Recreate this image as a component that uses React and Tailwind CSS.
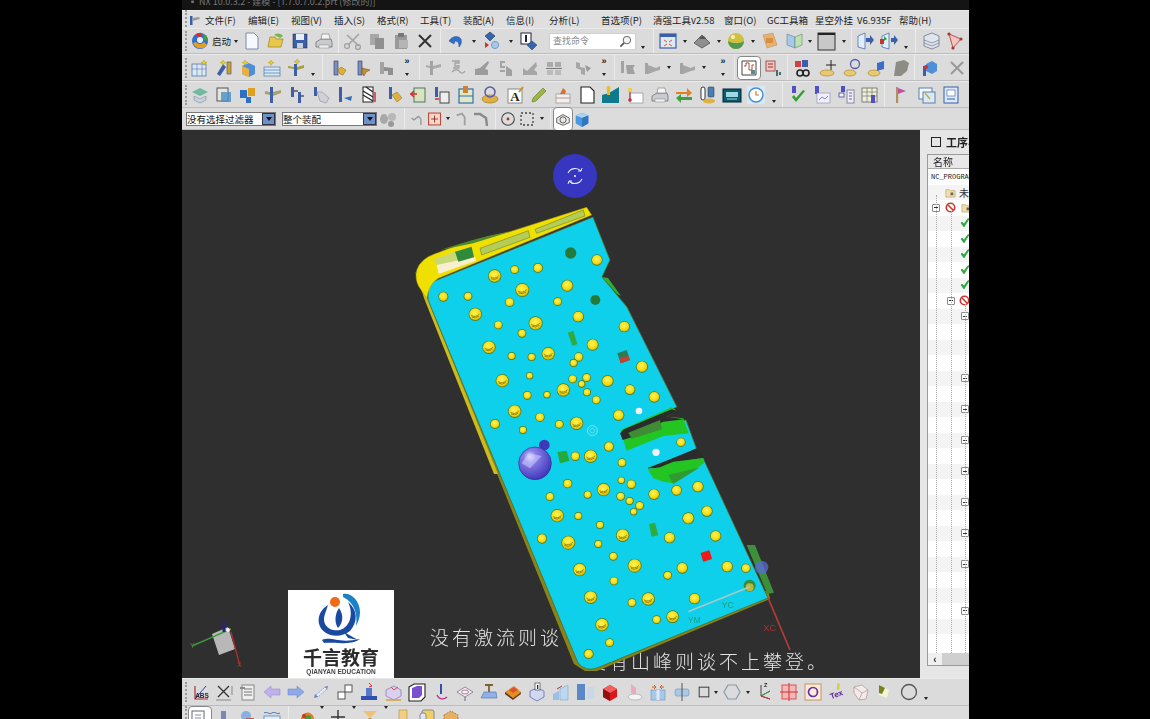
import React from "react";

const CJK = { fontFamily: '"Noto Sans CJK SC","Liberation Sans",sans-serif' };

const disabled = "#a3a3a3";
const Book = ({ f = "#7b8fc9" }) => <rect x="6" y="3" width="4" height="14" fill={f} stroke="#334" strokeWidth=".6" />;
const Spark = ({ x = 10, y = 4 }) => <path d={`M${x} ${y - 3}l1 2 2 .5-2 1-1 2-1-2-2-1 2-.5z`} fill="#e8d020" stroke="#8a7a10" strokeWidth=".3" />;

const icons = {
  logo: <><circle cx="10" cy="10" r="8" fill="#2f6fd0" /><path d="M3 12a8 8 0 0 0 14 2l-3-3a5 5 0 0 1-8 0z" fill="#e4a020" /><path d="M5 4a8 8 0 0 1 7-2l-2 5z" fill="#d03030" /><path d="M14 3a8 8 0 0 1 4 7l-5-1z" fill="#40a040" /><circle cx="10" cy="9" r="3" fill="#e8eef8" /></>,
  doc: <path d="M4 2h8l4 4v12H4z" fill="#f5f8fc" stroke="#7b8ea8" />,
  folder: <><path d="M2 16l2-10h5l1 2h7l-2 8z" fill="#e8c84a" stroke="#9a8420" strokeWidth=".7" /><path d="M8 4c3-2 6-2 9 1l-3 2z" fill="#7ab648" /></>,
  save: <><rect x="3" y="3" width="14" height="14" fill="#3a5ea8" stroke="#223" strokeWidth=".5" /><rect x="6" y="3" width="8" height="6" fill="#e8eef5" /><rect x="7" y="12" width="6" height="5" fill="#c8d0dc" /></>,
  print: <><path d="M2 11l5-3h10l1 3v5H2z" fill="#c8ccd0" stroke="#555" strokeWidth=".6" /><path d="M7 8l1-5h7l1 5z" fill="#f5f5f5" stroke="#777" strokeWidth=".6" /><rect x="5" y="14" width="10" height="3" fill="#eee" stroke="#777" strokeWidth=".4" /></>,
  cut: <><path d="M4 4l12 11M16 3L5 14" stroke={disabled} strokeWidth="1.6" /><circle cx="4" cy="15" r="2.4" fill="none" stroke={disabled} strokeWidth="1.4" /><circle cx="15" cy="16" r="2.4" fill="none" stroke={disabled} strokeWidth="1.4" /></>,
  copy: <><rect x="3" y="3" width="9" height="11" fill="#a8a8a8" /><rect x="8" y="7" width="9" height="11" fill="#8f8f8f" /></>,
  paste: <><rect x="4" y="4" width="12" height="14" fill="#999" /><rect x="7" y="2" width="6" height="4" fill="#777" /><rect x="8" y="9" width="9" height="8" fill="#b5b5b5" /></>,
  x: <path d="M4 4l12 12M16 4L4 16" stroke="#333" strokeWidth="2" />,
  xg: <path d="M4 4l12 12M16 4L4 16" stroke="#999" strokeWidth="2" />,
  undo: <path d="M4 10c3-5 9-6 12-2 1 3 0 6-2 8 0-4-1-6-4-6l-1 3z" fill="#2f6fc8" stroke="#1e4a90" strokeWidth=".5" />,
  diamond: <><path d="M8 1l5 4-5 5-5-5z" fill="#3465b0" stroke="#123" strokeWidth=".5" /><path d="M3 11l4 3-4 3z" fill="#d03020" /><circle cx="13" cy="14" r="3.6" fill="#a8c8e8" stroke="#6f9fd0" /></>,
  info: <><rect x="2" y="2" width="10" height="11" fill="#fff" stroke="#223" /><rect x="6" y="4" width="2" height="7" fill="#223" /><path d="M13 10l5 4-5 5-5-5z" fill="#3465b0" stroke="#123" strokeWidth=".4" /></>,
  fit: <><rect x="2" y="3" width="16" height="14" fill="#dfe8f5" stroke="#3a60a8" strokeWidth="1.2" /><rect x="2" y="3" width="16" height="3" fill="#3a60a8" /><path d="M6 9l3 2M14 9l-3 2M6 15l3-2M14 15l-3-2" stroke="#d06020" /></>,
  shade: <><path d="M2 12l8-8 8 8-8 5z" fill="#8f8f8f" stroke="#333" strokeWidth=".6" /><path d="M7 8c2-4 6-4 7 0z" fill="#555" /></>,
  sphere: <><circle cx="10" cy="10" r="8" fill="#d0c040" /><path d="M2 10a8 8 0 0 0 16 0c-4 3-11 3-16 0z" fill="#4f9a50" /><circle cx="7" cy="6" r="2" fill="#f5f0c0" /></>,
  layer: <><path d="M3 4l10-2 4 12-10 3z" fill="#e8b070" stroke="#b09060" strokeWidth=".5" /><rect x="6" y="7" width="7" height="5" fill="#d89040" /></>,
  book3: <><path d="M3 3l8 3v11l-8-3z" fill="#a8c8e8" stroke="#5a80a8" strokeWidth=".6" /><path d="M11 6l7-3v11l-7 3z" fill="#bfe0b0" stroke="#5a9060" strokeWidth=".6" /></>,
  square: <><rect x="2" y="2" width="17" height="17" fill="#c8c8c8" stroke="#333" /><rect x="2" y="2" width="17" height="2" fill="#222" /></>,
  doorb: <><path d="M3 5l7-3v16l-7-2z" fill="#e0eefc" stroke="#3a60a8" strokeWidth=".7" /><path d="M11 7h4V4l4 5-4 5v-3h-4z" fill="#3a60a8" /></>,
  doorg: <><path d="M3 5l7-3v16l-7-2z" fill="#e0eefc" stroke="#3a60a8" strokeWidth=".7" /><rect x="1" y="8" width="4" height="5" fill="#d03030" /><path d="M5 5l3 3-3 2z" fill="#30a040" /><path d="M12 7h3V4l4 5-4 5v-3h-3z" fill="#3a60a8" /></>,
  stack: <><path d="M3 5l8-3 7 3v10l-7 3-8-3z" fill="#dde5ee" stroke="#667" strokeWidth=".7" /><path d="M3 9l8 3 7-3M3 12l8 3 7-3" stroke="#667" strokeWidth=".6" fill="none" /></>,
  net: <><path d="M4 3l12 5-8 9z" fill="#f4c4c0" stroke="#b03030" strokeWidth=".8" /><circle cx="4" cy="3" r="1.6" fill="#b03030" /><circle cx="16" cy="8" r="1.6" fill="#b03030" /><circle cx="8" cy="17" r="1.6" fill="#b03030" /></>,
  t1: <><rect x="2" y="6" width="14" height="12" fill="#dce8f5" stroke="#5b78a8" strokeWidth=".8" /><path d="M2 11h14M7 6v12M12 6v12" stroke="#5b78a8" strokeWidth=".6" /><Spark x={14} y={5} /></>,
  t2: <><path d="M3 16L9 6l3 3-6 9z" fill="#3d5fa8" /><rect x="13" y="4" width="4" height="12" fill="#c8a040" stroke="#333" strokeWidth=".5" /><Spark x={9} y={5} /></>,
  t3: <><path d="M4 8l7-3 6 3v8l-6 3-7-3z" fill="#4f8fd8" /><path d="M4 8l7 3v8l-7-3z" fill="#e8b040" /><Spark x={7} y={5} /></>,
  t4: <><rect x="2" y="9" width="16" height="9" fill="#d8e8f5" stroke="#4a7ab0" strokeWidth=".7" /><path d="M2 12h16M2 15h16" stroke="#4a7ab0" strokeWidth=".7" /><Spark x={9} y={5} /></>,
  t5: <><rect x="8" y="6" width="3" height="12" fill="#3d5fa8" /><path d="M11 9l7-2v3l-7 2zM2 8l6 1v2l-6-1z" fill="#a8a040" /><Spark x={11} y={4} /></>,
  b1: <><Book /><path d="M10 12l3-3 5 3-3 5-3-1z" fill="#e0b030" stroke="#8a6a10" strokeWidth=".5" /></>,
  b2: <><Book /><path d="M10 10l8 2-4 2-2 4-2-3z" fill="#c09030" stroke="#6a4a10" strokeWidth=".5" /></>,
  bg: <><rect x="4" y="4" width="4" height="12" fill={disabled} /><path d="M8 9l9 1v7h-5v-4H8z" fill="#8f8f8f" /></>,
  g1: <><rect x="6" y="3" width="3" height="14" fill={disabled} /><path d="M9 8l8-2v3l-8 2zM2 7l4 1v2l-4-1z" fill="#aaa" /></>,
  g2: <path d="M4 3h7v2H7v3h4v2H5M4 14c3-3 6-3 8 0 2 2 4 1 5-1" stroke={disabled} strokeWidth="1.3" fill="none" />,
  g3: <><path d="M3 11l5-1 8-7 1 2-4 6 3 1v5H3z" fill="#9c9c9c" /></>,
  g4: <><path d="M4 3h5v2H6v3h3v2H4zM4 12h5v2H4z" fill={disabled} /><path d="M10 8l6 4v6h-6z" fill="#a0a0a0" /></>,
  g5: <><path d="M3 10l4 3 9-9 1 4-3 4 3 2v3H3z" fill="#a6a6a6" /></>,
  g6: <><path d="M3 4h6v5H3zM11 4h6v5h-6z" fill="#aaa" /><path d="M2 10h16v1H2z" fill="#777" /><path d="M3 12h6v5H3zM11 12h6v5h-6z" fill="#bbb" /></>,
  g7: <><rect x="3" y="3" width="3" height="12" fill={disabled} /><path d="M8 7h9l-2 3 2 6H9z" fill="#a0a0a0" /></>,
  g8: <><rect x="3" y="5" width="3" height="11" fill={disabled} /><path d="M6 7l8 3 4-2v4l-4 1-8 3z" fill="#a6a6a6" /></>,
  g9: <><path d="M3 4l4 1v4l5 1v7l-4-1v-4l-5-2z" fill="#a6a6a6" /><path d="M12 7l6 3-4 4z" fill="#999" /></>,
  bx: <><path d="M3 3h14v14H3z" fill="#fff" stroke="#444" /><path d="M5 8h2V5h3v7h3V7h2" stroke="#a04030" fill="none" strokeWidth=".9" /><rect x="12" y="12" width="4" height="4" fill="#5a8a90" /></>,
  r1: <><rect x="3" y="3" width="9" height="10" fill="#e8c8c0" stroke="#a03030" strokeWidth=".8" /><path d="M5 6h5M5 9h5" stroke="#a03030" /><path d="M14 12v6M17 14v3" stroke="#255" strokeWidth="1.6" /></>,
  r2: <><rect x="3" y="3" width="6" height="6" fill="#d04040" /><rect x="10" y="2" width="6" height="7" fill="#3d5fa8" /><circle cx="8" cy="15" r="3" fill="none" stroke="#222" strokeWidth="1.6" /><circle cx="14" cy="15" r="3" fill="none" stroke="#222" strokeWidth="1.6" /></>,
  r3: <><ellipse cx="8" cy="15" rx="7" ry="3" fill="#e8c870" stroke="#a88020" strokeWidth=".6" /><path d="M12 2v10M7 7h10" stroke="#222" strokeWidth="1" /></>,
  r4: <><ellipse cx="7" cy="15" rx="6" ry="3" fill="#e8c870" stroke="#a88020" strokeWidth=".6" /><circle cx="12" cy="6" r="4.5" fill="none" stroke="#5a5aa8" strokeWidth="1.3" /></>,
  r5: <><ellipse cx="7" cy="15" rx="6" ry="3" fill="#e8c870" stroke="#a88020" strokeWidth=".6" /><path d="M10 5l7-2v8l-7 2z" fill="#3a70c8" /></>,
  r6: <path d="M5 4l8-2 5 3-2 8-6 5H3l1-7z" fill="#8c8c84" />,
  r7: <><path d="M8 6l6-3 5 3v7l-5 3-6-3z" fill="#4f8fd8" /><rect x="5" y="8" width="3" height="10" fill="#3d5fa8" /><circle cx="8" cy="9" r="2" fill="#d03030" /></>,
  c1: <><path d="M2 7l8-4 8 4-8 4z" fill="#70b8a0" /><path d="M4 11l6 3 6-3v4l-6 3-6-3z" fill="#c8d4e0" stroke="#678" strokeWidth=".5" /></>,
  c2: <><rect x="3" y="3" width="11" height="13" fill="#e5e5d8" stroke="#556" /><rect x="7" y="7" width="10" height="10" fill="#4a90c8" opacity=".8" /></>,
  c3: <><rect x="2" y="5" width="7" height="8" fill="#2f70c0" /><rect x="10" y="3" width="7" height="8" fill="#e0a020" /><rect x="8" y="12" width="5" height="6" fill="#2f70c0" /></>,
  c4: <><rect x="7" y="2" width="3" height="16" fill="#3d5fa8" /><path d="M10 7l8-2v3l-8 3zM2 6l5 1v3l-5-1z" fill="#a8a070" /></>,
  c5: <><rect x="4" y="2" width="3" height="10" fill="#3d5fa8" /><rect x="11" y="7" width="3" height="11" fill="#3d5fa8" /><path d="M7 6h4M14 11h3" stroke="#556" strokeWidth="1.5" /></>,
  c6: <><rect x="3" y="2" width="3" height="9" fill="#3d5fa8" /><path d="M6 7h5l7 6-3 5-6-2z" fill="#d0d0d8" stroke="#889" strokeWidth=".6" /></>,
  c7: <><rect x="4" y="2" width="3" height="15" fill="#3d5fa8" /><path d="M9 13l8-2-1 5z" fill="#2f70c0" /></>,
  c8: <><rect x="4" y="2" width="10" height="15" fill="#fff" stroke="#222" /><path d="M4 6l10 6M4 10l10 6M7 2l7 5" stroke="#222" strokeWidth="1.2" /><path d="M16 7v10" stroke="#c03030" strokeWidth="1.4" /></>,
  c9: <><rect x="5" y="2" width="3" height="12" fill="#3d5fa8" /><path d="M8 10l5-3 5 6-5 4z" fill="#e0b040" stroke="#8a6a10" strokeWidth=".5" /></>,
  c10: <><rect x="6" y="3" width="11" height="14" fill="#d8e4c0" stroke="#4a7a60" /><path d="M2 9h7M6 6l-3 3 3 3" stroke="#d03030" strokeWidth="1.5" fill="none" /></>,
  c11: <><rect x="3" y="2" width="3" height="10" fill="#3d5fa8" /><rect x="8" y="7" width="9" height="11" fill="#eee" stroke="#444" /><path d="M3 14h4" stroke="#c03030" strokeWidth="1.5" /></>,
  c12: <><rect x="3" y="4" width="14" height="14" fill="#e0e8c8" stroke="#2f70a8" strokeWidth="1.2" /><rect x="7" y="1" width="5" height="7" fill="#d08030" /><path d="M3 11h14" stroke="#2f70a8" /></>,
  c13: <><ellipse cx="10" cy="14" rx="8" ry="4" fill="#e0b040" stroke="#8a6a10" strokeWidth=".6" /><circle cx="10" cy="7" r="5" fill="none" stroke="#5a5aa8" strokeWidth="1.5" /></>,
  text: <><rect x="3" y="4" width="14" height="14" fill="#fff" stroke="#888" /><text x="10" y="16" fontSize="13" fontFamily="Liberation Serif" fontWeight="700" textAnchor="middle" fill="#222">A</text><path d="M14 7l4-5" stroke="#c89020" strokeWidth="2" /></>,
  pen: <path d="M3 17l1-4L14 3l3 3L7 16z" fill="#9ab840" stroke="#556020" strokeWidth=".5" />,
  cam: <><rect x="3" y="9" width="14" height="9" fill="#f0f0f0" stroke="#aaa" /><path d="M7 9l3-6 3 3-1 3z" fill="#d87030" /><path d="M3 13h14" stroke="#c89080" /></>,
  page: <path d="M4 2h9l4 4v12H4z" fill="#fff" stroke="#222" strokeWidth="1.1" />,
  mount: <><path d="M1 18V10l7-2 10-6v16z" fill="#0f7a8a" /><rect x="6" y="2" width="3" height="8" fill="#e8c020" /><circle cx="7.5" cy="3" r="2" fill="#e8c020" /></>,
  chart: <><rect x="5" y="8" width="13" height="10" fill="#fff" stroke="#aaa" /><rect x="3" y="3" width="4" height="4" fill="#e8d050" /><path d="M5 7v7" stroke="#c03040" strokeWidth="1.2" /><circle cx="5" cy="15" r="1.8" fill="#c03040" /></>,
  swap: <><path d="M2 7h11V3l5 5-5 4V9H2z" fill="#e08020" /><path d="M18 12H7V9l-5 4 5 5v-3h11z" fill="#40a040" /></>,
  tool: <><rect x="3" y="2" width="4" height="13" rx="2" fill="#fff" stroke="#333" /><rect x="10" y="2" width="6" height="10" rx="1" fill="#4a80b0" stroke="#234" strokeWidth=".5" /><ellipse cx="11" cy="16" rx="6" ry="2.5" fill="#e0b040" /></>,
  calc: <><rect x="1" y="4" width="18" height="13" fill="#0a5a70" stroke="#023" /><rect x="4" y="7" width="12" height="5" fill="#9fd8e0" /><path d="M5 14h10" stroke="#9fd8e0" /></>,
  clock: <><rect x="1" y="1" width="18" height="18" fill="#d8e8f5" /><circle cx="10" cy="10" r="7" fill="#fff" stroke="#4a90d0" strokeWidth="1.5" /><path d="M10 6v4h3" stroke="#d08030" strokeWidth="1.2" fill="none" /></>,
  pcheck: <><rect x="4" y="1" width="4" height="7" fill="#5050c0" /><path d="M4 12l4 5 9-11-2-1-7 8-2-3z" fill="#2fa02f" /></>,
  p2: <><rect x="3" y="1" width="4" height="8" fill="#5050c0" /><rect x="5" y="8" width="13" height="10" fill="#eef" stroke="#88a" strokeWidth=".6" /><path d="M7 15l3-3 3 2 3-3" stroke="#88a" fill="none" /></>,
  p3: <><rect x="5" y="1" width="4" height="6" fill="#5050c0" /><rect x="3" y="8" width="5" height="4" fill="#eef" stroke="#66a" /><rect x="11" y="5" width="7" height="13" fill="#eef" stroke="#889" /><path d="M13 8h3M13 11h3M13 14h3" stroke="#667" /></>,
  p4: <><rect x="2" y="3" width="15" height="14" fill="#f0f0d8" stroke="#555" strokeWidth=".7" /><path d="M2 7h15M2 11h15M7 3v14M12 3v14" stroke="#777" strokeWidth=".7" /><rect x="11" y="10" width="4" height="8" fill="#5050c0" /></>,
  flag: <><rect x="6" y="2" width="2.2" height="16" fill="#b09060" /><path d="M8 3l8 3-8 3z" fill="#c050a0" /></>,
  win: <><rect x="2" y="3" width="13" height="11" fill="#f5f8fc" stroke="#5a80a8" /><rect x="6" y="7" width="12" height="11" fill="#dce8f5" stroke="#5a80a8" /><path d="M8 8l5 6" stroke="#b8b040" strokeWidth="1.4" /></>,
  win2: <><rect x="3" y="2" width="14" height="16" fill="#dce8f5" stroke="#3a60a8" /><rect x="6" y="5" width="8" height="6" fill="#fff" stroke="#3a60a8" strokeWidth=".6" /><path d="M6 14h8" stroke="#3a60a8" /></>,
  abs: <><path d="M5 4v13h13" stroke="#b03030" strokeWidth="1.2" fill="none" /><path d="M5 17L16 4" stroke="#3040a0" strokeWidth="1" /><text x="12" y="16" fontSize="6.5" fontFamily="Liberation Sans" fontWeight="700" textAnchor="middle" fill="#224">ABS</text></>,
  xax: <><path d="M4 4l11 11M15 4L4 15" stroke="#333" strokeWidth="1.3" /><path d="M2 18h15M18 4v9" stroke="#666" strokeWidth=".7" /></>,
  list: <><rect x="4" y="3" width="12" height="15" fill="#eee" stroke="#888" /><path d="M6 7h8M6 10h8M6 13h8" stroke="#777" /><path d="M2 6h5" stroke="#888" strokeWidth="2" /></>,
  left: <path d="M2 10l7-6v3h9v6H9v3z" fill="#c0b0ec" stroke="#9080c8" strokeWidth=".5" />,
  right: <path d="M18 10l-7-6v3H2v6h9v3z" fill="#8fa8e8" stroke="#6a80c8" strokeWidth=".5" />,
  dbl: <><path d="M3 16l4-1-3-3z" fill="#6a80c8" /><path d="M17 4l-4 1 3 3z" fill="#6a80c8" /><path d="M5 13l9-8 2 2-9 8z" fill="#e8eef5" stroke="#6a80c8" strokeWidth=".7" strokeDasharray="2 1" /></>,
  boxes: <><rect x="3" y="10" width="7" height="7" fill="#fff" stroke="#555" /><rect x="10" y="3" width="7" height="7" fill="#fff" stroke="#555" /></>,
  base: <><rect x="2" y="14" width="16" height="4" fill="#2f50b0" /><rect x="7" y="6" width="6" height="8" fill="#5a78c8" /><path d="M10 1l3 3-3 1" stroke="#d03030" fill="none" /></>,
  cube: <><path d="M3 8l8-4 7 4v6l-7 4-8-4z" fill="#dcd0f0" stroke="#8a70b8" strokeWidth=".7" /><path d="M3 18h15" stroke="#d0a030" strokeWidth="1.4" /><path d="M8 5l3 3 4-3" stroke="#d05050" fill="none" /></>,
  pcube: <><path d="M2 5l5-3h11v13l-4 4H2z" fill="#fff" stroke="#222" strokeWidth="1.1" /><path d="M5 6l5-2h5v9l-3 3H5z" fill="#7a50d0" /></>,
  rot: <><path d="M6 13a6 6 0 0 0 10 2" stroke="#c03090" strokeWidth="1.3" fill="none" /><rect x="9" y="2" width="2" height="10" fill="#3050b0" /></>,
  disc: <><path d="M2 10l8-5 8 5-8 5z" fill="#eef" stroke="#667" strokeWidth=".7" /><ellipse cx="10" cy="10" rx="3.5" ry="2" fill="none" stroke="#a05040" strokeWidth=".7" /><path d="M10 15v4" stroke="#667" /></>,
  t: <><path d="M2 16l3-6h12l1 6z" fill="#8fb0e8" stroke="#5070a8" strokeWidth=".6" /><path d="M6 3h8M10 3v7" stroke="#806030" strokeWidth="1.8" /></>,
  choc: <><path d="M2 10l9-6 7 6-8 6z" fill="#e09020" /><path d="M2 10l8 6v2l-8-6z" fill="#5a3010" /><path d="M10 16l8-6v2l-8 6z" fill="#7a4010" /><path d="M6 8l5-3 4 3-5 3z" fill="#e05030" /></>,
  icub: <><path d="M3 9l7-3 7 3v6l-7 4-7-4z" fill="#d0d8f0" stroke="#5060a0" strokeWidth=".7" /><rect x="8" y="1" width="5" height="7" fill="#fff" stroke="#223" strokeWidth=".6" /><rect x="10" y="3" width="1.3" height="4" fill="#223" /></>,
  bar: <><path d="M2 12l6-3v9H2z" fill="#9ac0e8" /><path d="M9 7l8-4v15H9z" fill="#bcd8f0" stroke="#7098c0" strokeWidth=".5" /><path d="M6 7l5-3" stroke="#c03030" /></>,
  bb: <><rect x="1" y="2" width="8" height="16" fill="#5a88c8" /><rect x="11" y="5" width="7" height="12" fill="#c8d8e8" /></>,
  red: <><path d="M3 7l7-4 7 4v8l-7 4-7-4z" fill="#d81818" /><path d="M3 7l7 4 7-4-7-4z" fill="#f06060" /><path d="M3 7l7 4v8l-7-4z" fill="#901010" /></>,
  pink: <><path d="M7 2l5 4v8l-5-3z" fill="#f0a8c0" /><ellipse cx="11" cy="15" rx="7" ry="3" fill="#f4f4f4" stroke="#bbb" /></>,
  pack: <><rect x="3" y="8" width="14" height="10" fill="#a8c8e8" stroke="#6a90b8" strokeWidth=".6" /><rect x="8.5" y="8" width="3" height="10" fill="#e0e8f0" /><path d="M4 5h4M12 5h4M8 5l-2-2M8 5l-2 2M12 5l2-2M12 5l2 2" stroke="#d06020" /></>,
  cyl: <><rect x="3" y="7" width="14" height="7" rx="2" fill="#a8c8e8" stroke="#6a90b8" strokeWidth=".6" /><path d="M10 1v18" stroke="#555" /></>,
  rect: <rect x="4" y="4" width="12" height="12" fill="none" stroke="#444" strokeWidth="1.3" />,
  hex: <path d="M6 3h8l4 7-4 7H6l-4-7z" fill="none" stroke="#8898a8" strokeWidth="1.2" />,
  csys: <><path d="M6 3v11M6 14l9-5M6 14l9 3" stroke="#444" /><path d="M6 14l9-5" stroke="#30a040" /><path d="M6 14l9 3" stroke="#c03030" /><text x="9" y="5" fontSize="5.5" fontFamily="Liberation Sans" fontWeight="700" fill="#222">Z</text></>,
  cross: <><rect x="3" y="3" width="14" height="14" fill="#f4b8b8" stroke="#e05050" /><path d="M10 1v18M1 10h18" stroke="#d03030" /></>,
  oc: <><rect x="2" y="2" width="16" height="16" fill="#fbecd8" stroke="#d09060" /><circle cx="10" cy="10" r="4.5" fill="none" stroke="#6030b0" strokeWidth="1.7" /></>,
  tex: <><path d="M10 1l3 1-1 6h-2z" fill="#d8d040" /><text x="10" y="15" fontSize="8" fontFamily="Liberation Sans" fontWeight="700" textAnchor="middle" fill="#6020a0" transform="rotate(-20 10 14)">Tex</text></>,
  pbox: <><path d="M3 5l8-2 6 5-2 9-7 1-5-7z" fill="#f4eaea" stroke="#b09090" strokeWidth=".7" /><path d="M3 5l8 6 6-3M11 11l-3 7" stroke="#b09090" strokeWidth=".7" fill="none" /></>,
  bell: <><path d="M4 3l10 5-2 8-8-3z" fill="#f4f4d8" /><path d="M4 3l6 3-3 6-3-1z" fill="#788020" /></>,
  circ: <circle cx="10" cy="10" r="7.5" fill="none" stroke="#555" strokeWidth="1.3" />,
  w1: <><rect x="2" y="3" width="12" height="13" fill="#fff" stroke="#667" /><path d="M5 7h6M5 10h6" stroke="#88a" /><rect x="11" y="12" width="5" height="5" fill="#bbb" /></>,
  w2: <><rect x="7" y="3" width="5" height="8" fill="#7a88b8" /><path d="M3 17l4-6h6l3 6z" fill="#e0a030" /></>,
  w3: <><circle cx="8" cy="8" r="5" fill="#88b0e0" /><rect x="8" y="10" width="8" height="7" fill="#d05050" /></>,
  w4: <><rect x="2" y="8" width="16" height="10" fill="#e0ecf8" stroke="#4a7ab0" strokeWidth=".7" /><path d="M2 5c3-2 5 2 8 0s5 2 8 0" stroke="#4a7ab0" fill="none" /></>,
  w5: <><path d="M5 15c-3-6 2-12 8-10 4 2 5 6 3 10z" fill="#e08020" /><circle cx="11" cy="10" r="3" fill="#40a040" /><circle cx="7" cy="8" r="2" fill="#d03030" /></>,
  w6: <path d="M10 2v16M3 9h14" stroke="#333" strokeWidth="1.4" />,
  w7: <><path d="M3 3h14l-7 7z" fill="#f0c070" /><rect x="8.5" y="10" width="3" height="8" fill="#d08030" /></>,
  w8: <><rect x="6" y="2" width="8" height="16" fill="#f0d080" stroke="#a08030" strokeWidth=".5" /></>,
  w9: <><rect x="5" y="2" width="12" height="16" rx="2" fill="#f0d060" stroke="#889" /><rect x="3" y="5" width="6" height="13" rx="2" fill="#d8e8f5" stroke="#889" /></>,
  w10: <><path d="M3 7l7-4 7 4v9l-7 3-7-3z" fill="#e8b060" stroke="#a06020" strokeWidth=".7" strokeDasharray="2 1" /></>,
  filt: <><ellipse cx="6" cy="10" rx="4" ry="5" fill="#a8a8a8" /><ellipse cx="14" cy="8" rx="4" ry="4" fill="#b8b8b8" /><ellipse cx="13" cy="15" rx="3" ry="3" fill="#999" /></>,
  fg1: <path d="M3 9l3 2 5-4 3 3M14 10v7" stroke="#999" strokeWidth="1.6" fill="none" />,
  rbox: <><rect x="3" y="3" width="14" height="14" fill="#f6d8c8" stroke="#c04030" strokeWidth="1.2" /><path d="M10 6v8M6 10h8" stroke="#8a2020" /></>,
  fg2: <path d="M4 6l6-2 3 4v9" stroke="#a0a0a0" strokeWidth="2" fill="none" />,
  fg3: <path d="M3 5h6l6 4 1 8" stroke="#8a8a8a" strokeWidth="2.4" fill="none" />,
  cir: <><circle cx="10" cy="10" r="7" fill="none" stroke="#444" strokeWidth="1.2" /><circle cx="10" cy="10" r="1.6" fill="#a03030" /></>,
  dots: <rect x="4" y="4" width="12" height="12" fill="none" stroke="#444" strokeWidth="1.3" strokeDasharray="2 2" />,
  sel: <><path d="M3 9l7-4 7 4v5l-7 3-7-3z" fill="#e8e8e8" stroke="#555" /><circle cx="10" cy="11" r="3.4" fill="none" stroke="#555" /></>,
  bcube: <><path d="M3 6l7-3 7 3v9l-7 4-7-4z" fill="#4a98e0" /><path d="M3 6l7 3 7-3-7-3z" fill="#a8d4f4" /><path d="M10 9v10l7-4V6z" fill="#2f78c0" /></>,
};

const Tool = ({ n, w = "w-6", on }) => (
  <div className={`${w} h-6 shrink-0 flex items-center justify-center ${on ? "bg-white border border-[#888] rounded-sm" : ""}`}>
    <svg width="20" height="20" viewBox="0 0 20 20">{icons[n]}</svg>
  </div>
);
const Caret = ({ w = "w-[10px]" }) => (
  <div className={`${w} shrink-0 flex items-center justify-center`}>
    <div className="w-0 h-0 border-x-[2.5px] border-x-transparent border-t-[3px] border-t-[#222]" />
  </div>
);
const LowCaret = ({ w = "w-[10px]" }) => (
  <div className={`${w} h-6 shrink-0 flex items-end justify-center pb-1`}>
    <div className="w-0 h-0 border-x-[2.5px] border-x-transparent border-t-[3px] border-t-[#222]" />
  </div>
);
const More = ({ w = "w-[18px]" }) => (
  <div className={`${w} h-6 shrink-0 flex flex-col items-center justify-between`}>
    <span className="text-[9px] leading-[10px] font-bold text-[#222]" style={{ fontFamily: "Liberation Sans" }}>»</span>
    <div className="mb-1 w-0 h-0 border-x-[2.5px] border-x-transparent border-t-[3px] border-t-[#222]" />
  </div>
);
const Sep = ({ w = "w-[6px]" }) => (
  <div className={`${w} h-full shrink-0 flex justify-center`}>
    <div className="w-px h-full bg-[#c4c4c4] border-r border-r-[#ececec]" />
  </div>
);
const Gap = ({ w }) => <div className={`${w} shrink-0`} />;
const Grip = () => <div className="w-[3px] h-[20px] mr-0 shrink-0 border-l-2 border-dotted border-l-[#9a9a9a]" />;
const Bar = ({ h, children, extra = "" }) => (
  <div className={`${h} flex items-center pl-[3px] bg-[#dbdbdb] border-b border-b-[#bdbdbd] border-t border-t-[#eaeaea] shrink-0 overflow-hidden ${extra}`}>
    <Grip />
    {children}
  </div>
);

const menu = [
  ["文件(F)", "w-[43px]"], ["编辑(E)", "w-[43px]"], ["视图(V)", "w-[43px]"], ["插入(S)", "w-[43px]"], ["格式(R)", "w-[43px]"],
  ["工具(T)", "w-[43px]"], ["装配(A)", "w-[43px]"], ["信息(I)", "w-[43px]"], ["分析(L)", "w-[52px]"], ["首选项(P)", "w-[52px]"],
  ["清强工具v2.58", "w-[71px]"], ["窗口(O)", "w-[43px]"], ["GC工具箱", "w-[48px]"], ["星空外挂", "w-[42px]"], ["V6.935F", "w-[42px]"], ["帮助(H)", "w-[43px]"],
];

const row3 = ["c1","c2","c3","c4","c5","c6","c7","c8","c9","c10","c11","c12","c13","text","pen","cam","page","mount","chart","print","swap","tool","calc","clock"];
const bottom = ["abs","xax","list","left","right","dbl","boxes","base","cube","pcube","rot","disc","t","choc","icub","bar","bb","red","pink","pack","cyl"];

const holes3 = [[284,228,18],[344,209,11],[414,204,13],[591,180,15],[130,290,13],[204,289,11],[367,270,19],[502,257,16],[329,307,12],[473,305,11],[226,343,18],[535,350,15],[295,375,11],[407,370,19],[366,400,11],[673,380,15],[267,442,18],[578,434,16],[335,468,10],[395,471,10],[445,461,18],[536,471,12],[521,489,10],[726,500,16],[389,527,9],[307,542,18],[518,537,11],[560,533,11],[545,552,9],[623,543,16],[690,569,14],[382,586,11],[441,584,9],[490,570,18],[561,577,10],[589,600,11],[763,591,15],[344,634,18],[420,652,12],[656,646,15],[285,672,13],[478,673,11],[530,670,18],[369,690,10],[627,740,13]];
const holes4 = [[226,79,12],[272,79,18],[366,98,11],[203,161,12],[364,151,9],[394,163,12],[311,179,18],[462,193,15],[530,181,14],[594,170,15],[150,200,11],[263,194,10],[362,199,11],[389,213,10],[419,227,11],[401,245,9],[172,257,18],[235,258,10],[621,244,15],[565,265,16],[300,285,10],[126,326,13],[205,338,19],[295,342,10],[368,316,18],[509,323,15],[647,318,15],[340,379,11],[239,419,18],[404,407,19],[547,414,15],[682,410,15],[738,415,12],[503,436,11],[342,453,11],[272,502,18],[445,507,18],[584,506,15],[396,518,11],[306,584,18],[518,560,17],[470,569,11],[329,638,11],[266,672,13]];

const Hole = ({ h }) => {
  const [x, y, r] = h;
  return (
    <g>
      <circle cx={x} cy={y} r={r + 2} fill="#4f7a24" />
      <circle cx={x} cy={y} r={r} fill="url(#ball)" />
      {r > 16 && <path d={`M${x - r * 0.7} ${y + r * 0.15}q${r * 0.7} ${r * 0.5} ${r * 1.4} -${r * 0.2}M${x - r * 0.6} ${y + r * 0.45}q${r * 0.6} ${r * 0.35} ${r * 1.2} -${r * 0.15}`} stroke="#8a7410" strokeWidth="2.5" fill="none" />}
    </g>
  );
};

function Model() {
  return (
    <svg className="absolute inset-0 w-full h-full" viewBox="182 130 738 548">
      <defs>
        <radialGradient id="ball" cx="45%" cy="40%" r="65%">
          <stop offset="0%" stopColor="#fff35a" />
          <stop offset="70%" stopColor="#f2da0e" />
          <stop offset="100%" stopColor="#a89a10" />
        </radialGradient>
        <radialGradient id="pball" cx="35%" cy="30%" r="75%">
          <stop offset="0%" stopColor="#e8e8ff" />
          <stop offset="25%" stopColor="#8a80e8" />
          <stop offset="100%" stopColor="#3d34b8" />
        </radialGradient>
      </defs>
      <polygon points="415,272 425,296 574,664 585,671 597,671 770,599 768,590 597,660 437,285" fill="#8a8418" />
      <path d="M416 272 L427 298 L498 474 L494 474 L424 298 Z" fill="#cdbc1c" />
      <path d="M593 217 L610 260 L602 277 L627 307 L677 407 L622 431 L686 420 L697 450 L648 468 L703 458 L768 598 L597 668 Q586 672 578 663 L428 300 L428 288 Q430 282 437 280 Z" fill="#0fd0ea" stroke="#506a20" strokeWidth=".8" />
      <polygon points="602,277 608,278 621,296 617,294" fill="#2fae2f" />
      <g transform="translate(400 200) scale(.3333)">
        <path d="M48 225Q50 190 85 170Q200 120 330 95L560 22L575 45L115 235Q88 250 80 295L62 268Q48 250 48 225Z" fill="#f0e000" stroke="#a89a10" strokeWidth="1.500" />
        <path d="M120 150 Q240 110 330 95 L220 130 Z" fill="#4a8a30" />
        <polygon points="240,145 385,92 390,112 245,165" fill="#b4cc58" stroke="#7a8a20" strokeWidth="2" />
        <polygon points="405,88 550,30 555,48 410,100" fill="#b4cc58" stroke="#7a8a20" strokeWidth="2" />
        <polygon points="100,178 165,155 222,168 112,198" fill="#c8d878" />
        <polygon points="110,195 225,170 228,182 116,222" fill="#f6f0d0" />
        <polygon points="165,155 215,140 222,172 175,185" fill="#2f8a3c" />
        <polygon points="662,690 815,622 830,632 800,650 850,655 866,700 790,708 680,752" fill="#22c522" />
        <polygon points="660,700 672,688 815,628 832,632 800,650 852,658 790,665 695,712 668,720" fill="#2b2b2b" />
        <polygon points="685,698 780,660 786,688 695,716" fill="#3f8c35" />
        <circle cx="512" cy="159" r="17" fill="#257a3a" />
        <circle cx="586" cy="300" r="15" fill="#257a3a" />
        <polygon points="503,398 520,392 532,432 518,438" fill="#2faa3f" />
        <polygon points="652,460 680,450 690,480 662,490" fill="#2f7a55" />
        <polygon points="658,475 685,468 690,480 662,490" fill="#c84030" />
        <circle cx="717" cy="633" r="10" fill="#f0f4f4" />
        <circle cx="577" cy="692" r="15" fill="none" stroke="#8fe8f4" strokeWidth="2.500" />
        <circle cx="577" cy="692" r="7" fill="none" stroke="#8fe8f4" strokeWidth="2" />
        {holes3.map((h, i) => <Hole key={i} h={h} />)}
        <Hole h={[843, 727, 12]} />
      </g>
      <g transform="translate(500 430) scale(.3333)">
        <polygon points="445,115 590,55 612,82 520,95 480,115" fill="#2b2b2b" />
        <polygon points="443,118 480,112 520,95 610,85 612,100 520,160 490,155 460,145" fill="#22c522" />
        <polygon points="505,135 600,112 520,162" fill="#2f9a30" />
        <polygon points="740,345 765,345 822,488 802,492" fill="#3e8f3a" />
        <polygon points="172,66 200,62 208,92 180,100" fill="#22aa3a" />
        <polygon points="447,282 465,278 475,316 455,320" fill="#2faa3f" />
        <rect x="605" y="364" width="28" height="28" rx="3" fill="#f01818" transform="rotate(-18 619 378)" />
        <circle cx="468" cy="67" r="11" fill="#eef2f2" />
        {holes4.map((h, i) => <Hole key={i} h={h} />)}
        <circle cx="749" cy="467" r="18" fill="#3a8a3a" />
        <circle cx="749" cy="472" r="12" fill="#b8b83a" />
        <circle cx="133" cy="45" r="16" fill="#4038b8" />
        <circle cx="105" cy="100" r="49" fill="url(#pball)" stroke="#2f2a90" strokeWidth="2" />
        <path d="M65 100L85 70L125 78L90 115Z" fill="#cfcfff" opacity=".55" />
        <path d="M805 505L870 660" stroke="#b53a3a" strokeWidth="5" />
        <path d="M750 470L565 545" stroke="#a8c8c8" strokeWidth="5" />
        <circle cx="785" cy="412" r="20" fill="#5a68d8" opacity=".75" />
        <text x="790" y="602" fontSize="28" fill="#a83030" fontFamily="Liberation Sans">XC</text>
        <text x="665" y="535" fontSize="26" fill="#18a088" fontFamily="Liberation Sans">YC</text>
        <text x="563" y="578" fontSize="26" fill="#18a088" fontFamily="Liberation Sans">YM</text>
      </g>
      <circle cx="575" cy="176" r="22" fill="#3636c0" />
      <path d="M568 173a8 8 0 0 1 13 -2M582 179a8 8 0 0 1 -13 2" stroke="#e8e8ff" strokeWidth="1.100" fill="none" />
      <path d="M581 171l1-3M581 171l-3 0M569 181l-1 3M569 181l3 0" stroke="#e8e8ff" strokeWidth="1" />
      <circle cx="575" cy="176" r="1" fill="#fff" />
      <g>
        <polygon points="212,634 228,627 235,649 219,655" fill="#b8b8b8" />
        <path d="M231 629L192 646" stroke="#3e9a3e" strokeWidth="1.400" />
        <path d="M231 632L240 666" stroke="#a83030" strokeWidth="1.400" />
        <path d="M224 632V622" stroke="#25257a" strokeWidth="3" />
        <circle cx="228" cy="630" r="2" fill="#eee" />
        <text x="190" y="648" fontSize="7" fill="#3e9a3e" fontFamily="Liberation Sans">Y</text>
        <text x="237" y="667" fontSize="7" fill="#a83030" fontFamily="Liberation Sans">X</text>
      </g>
    </svg>
  );
}

const Logo = () => (
  <div className="absolute left-[106px] bottom-0 w-[106px] h-[88px] bg-white flex flex-col items-center overflow-hidden">
    <svg width="106" height="56" viewBox="0 0 106 56" className="shrink-0">
      <circle cx="47" cy="12" r="5" fill="#f06a1a" />
      <path d="M40 15C28 22 27 38 40 44C46 47 56 46 62 41C70 32 70 20 60 12C66 24 62 37 52 40C42 42 33 35 37 24Z" fill="#1a4aa0" />
      <path d="M55 4C62 2 72 10 72 22C72 28 70 32 68 36C70 24 66 12 55 7Z" fill="#1b82c8" />
      <path d="M51 18C47 24 46 32 50 38C55 33 56 25 51 18Z" fill="#1a4aa0" />
      <path d="M56 42L70 50L60 48Z" fill="#1a4aa0" />
      <path d="M34 50C44 46 50 54 72 49C62 56 46 52 36 53Z" fill="#1a4aa0" />
    </svg>
    <div className="text-[19px] leading-[21px] font-bold text-[#2b2b2b] tracking-normal" style={CJK}>千言教育</div>
    <div className="text-[6.5px] leading-[9px] font-bold text-[#444] whitespace-nowrap" style={{ fontFamily: "Liberation Sans" }}>QIANYAN EDUCATION</div>
  </div>
);

const NoSign = () => (
  <svg width="11" height="11" viewBox="0 0 12 12" className="shrink-0"><circle cx="6" cy="6" r="4.600" fill="#fff" stroke="#c83a30" strokeWidth="1.800" /><path d="M3 3l6 6" stroke="#c83a30" strokeWidth="1.800" /></svg>
);
const Fold = () => (
  <svg width="11" height="11" viewBox="0 0 12 12" className="shrink-0"><path d="M1 3h4l1 1h5v7H1z" fill="#f2dfae" stroke="#b89a60" strokeWidth=".7" /><rect x="6" y="6" width="3" height="3" fill="#666" /></svg>
);
const Check = () => (
  <svg width="10" height="10" viewBox="0 0 10 10" className="shrink-0"><path d="M1 5l3 4 5-8-1-.5-4 5.500L2 4z" fill="#2ca640" stroke="#2ca640" strokeWidth=".7" /></svg>
);
const Minus = () => (
  <div className="w-[8px] h-[8px] border border-[#8a8a8a] bg-white flex items-center justify-center shrink-0 rounded-[1px]"><div className="w-[4px] h-px bg-[#333]" /></div>
);

const treeRows = [
  <span className="text-[7px] font-['Liberation_Mono'] text-[#222] whitespace-nowrap pl-[3px]">NC_PROGRAM</span>,
  <div className="pl-[17px] flex items-center gap-[3px] whitespace-nowrap"><Fold /><span className="text-[10px] text-[#333]" style={CJK}>未用项</span></div>,
  <div className="pl-[4px] flex items-center gap-[5px]"><Minus /><NoSign /><Fold /></div>,
  ...Array.from({ length: 5 }, () => <div className="pl-[32px]"><Check /></div>),
  <div className="pl-[19px] flex items-center gap-[4px]"><Minus /><NoSign /></div>,
];
for (let i = 9; i < 31; i++) {
  const m = [9, 13, 15, 17, 19, 21, 23, 25, 28].includes(i);
  treeRows.push(m ? <div className="pl-[33px]"><Minus /></div> : null);
}

function Panel() {
  return (
    <div className="w-[49px] shrink-0 bg-[#e6e6e6] flex flex-col overflow-hidden">
      <div className="h-[24px] flex items-center pl-[11px] gap-[5px] whitespace-nowrap shrink-0">
        <div className="w-[10px] h-[10px] border border-[#222] shrink-0" />
        <span className="text-[11px] font-bold text-[#222]" style={CJK}>工序导航器</span>
      </div>
      <div className="ml-[7px] w-[60px] h-[512px] bg-white border border-[#9a9a9a] flex flex-col shrink-0">
        <div className="h-[14px] bg-[#e8e8e8] border-b border-b-[#aaa] pl-[5px] flex items-center shrink-0">
          <span className="text-[10px] text-[#222]" style={CJK}>名称</span>
        </div>
        <div className="relative flex-1 overflow-hidden">
          {treeRows.map((c, i) => (
            <div key={i} className={`h-[15.5px] flex items-center ${i % 2 ? "bg-[#f4f4f4]" : "bg-white"}`}>{c}</div>
          ))}
          <div className="absolute top-[26px] bottom-0 left-[8px] border-l border-dotted border-l-[#aaa]" />
          <div className="absolute top-[42px] bottom-0 left-[23px] border-l border-dotted border-l-[#aaa]" />
          <div className="absolute top-[135px] bottom-0 left-[37px] border-l border-dotted border-l-[#aaa]" />
        </div>
        <div className="h-[12px] flex items-stretch shrink-0 bg-[#f0f0f0]">
          <div className="w-[14px] flex items-center justify-center text-[10px] font-bold text-[#333]" style={{ fontFamily: "Liberation Sans" }}>‹</div>
          <div className="flex-1 bg-[#cfcfcf]" />
        </div>
      </div>
    </div>
  );
}

export default function App() {
  return (
    <div className="w-[1150px] h-[719px] bg-black pl-[182px] overflow-hidden" style={CJK}>
      <div className="w-[787px] h-[719px] flex flex-col overflow-hidden blur-[0.35px]">
        <div className="h-[10px] bg-[#141414] overflow-hidden shrink-0 pl-[2px]">
          <div className="text-[9px] leading-[9px] -mt-[3px] text-[#777] whitespace-pre">  ▪ NX 10.0.3.2 - 建模 - [T.7.0.7.0.2.prt (修改的)]</div>
        </div>
        <div className="h-[18px] bg-[#dfdfdf] flex items-center pl-[3px] shrink-0 border-t border-t-[#eaeaea]">
          <Grip />
          <svg width="14" height="12" viewBox="0 0 14 12" className="shrink-0"><rect x="2" y="2" width="2.500" height="9" fill="#3d5fa8" /><path d="M4.500 4l7-1v2l-7 2z" fill="#999" /></svg>
          <div className="w-[3px] shrink-0" />
          {menu.map(([t, w]) => (
            <div key={t} className={`${w} shrink-0 text-[9.5px] leading-[14px] text-[#222] whitespace-nowrap`} style={CJK}>{t}</div>
          ))}
        </div>

        <Bar h="h-[26px]">
          <Tool n="logo" />
          <div className="w-[20px] shrink-0 text-[9.5px] text-[#222]">启动</div>
          <Caret w="w-[8px]" />
          <Tool n="doc" /><Tool n="folder" /><Tool n="save" /><Tool n="print" />
          <Sep w="w-[5px]" />
          <Tool n="cut" /><Tool n="copy" /><Tool n="paste" /><Tool n="x" />
          <Sep />
          <Tool n="undo" /><Caret w="w-[13px]" /><Tool n="diamond" /><Caret w="w-[13px]" /><Tool n="info" />
          <Gap w="w-[8px]" />
          <div className="w-[87px] h-[17px] shrink-0 bg-white border border-[#d0d0d0] flex items-center justify-between px-[3px]">
            <span className="text-[9px] text-[#888]">查找命令</span>
            <svg width="13" height="13" viewBox="0 0 14 14"><circle cx="8.500" cy="5.500" r="4" fill="#f4f4f4" stroke="#555" /><path d="M5.500 8.500L1.500 12.500" stroke="#555" strokeWidth="1.800" /></svg>
          </div>
          <LowCaret w="w-[14px]" />
          <Sep />
          <Tool n="fit" /><Caret /><Tool n="shade" /><Caret /><Tool n="sphere" /><Caret /><Tool n="layer" /><Tool n="book3" /><Caret w="w-[8px]" /><Tool n="square" /><Caret w="w-[12px]" />
          <Sep w="w-[3px]" />
          <Tool n="doorb" /><Tool n="doorg" /><LowCaret />
          <Sep w="w-[8px]" />
          <Tool n="stack" /><Tool n="net" />
        </Bar>

        <Bar h="h-[27px]">
          <Tool n="t1" /><Tool n="t2" /><Tool n="t3" /><Tool n="t4" /><Tool n="t5" />
          <LowCaret />
          <Sep w="w-[8px]" />
          <Tool n="b1" /><Tool n="b2" /><Tool n="bg" /><More />
          <Sep />
          <Tool n="g1" /><Tool n="g2" /><Tool n="g3" /><Tool n="g4" /><Tool n="g5" /><Tool n="g6" />
          <Gap w="w-[5px]" />
          <Tool n="g9" /><More />
          <Sep w="w-[3px]" />
          <Tool n="g7" /><Tool n="g8" /><Caret /><Gap w="w-px" /><Tool n="g8" /><Caret />
          <Gap w="w-[5px]" /><More />
          <Sep w="w-[5px]" />
          <Tool n="bx" on /><Tool n="r1" />
          <Sep w="w-[5px]" />
          <Tool n="r2" /><Gap w="w-[3px]" /><Tool n="r3" /><Tool n="r4" /><Tool n="r5" /><Tool n="r6" />
          <Sep w="w-[3px]" />
          <Tool n="r7" /><Gap w="w-[5px]" /><Tool n="xg" />
        </Bar>

        <Bar h="h-[27px]">
          {row3.map((n, i) => <Tool key={i} n={n} w="w-[24.2px]" />)}
          <LowCaret />
          <Sep w="w-[7px]" />
          <Tool n="pcheck" /><Tool n="p2" /><Tool n="p3" /><Tool n="p4" />
          <Sep />
          <Tool n="flag" /><Gap w="w-[3px]" /><Tool n="win" /><Tool n="win2" />
        </Bar>

        <div className="h-[22px] bg-[#dcdcdc] flex items-center pl-[4px] shrink-0 border-b border-b-[#bdbdbd]">
          <div className="w-[90px] h-[14px] shrink-0 bg-white border border-[#777] flex items-center justify-between">
            <span className="text-[9.5px] leading-[12px] text-[#111] whitespace-nowrap">没有选择过滤器</span>
            <div className="w-[13px] h-[12px] bg-[#6f8fc8] border border-[#334] flex items-center justify-center"><div className="w-0 h-0 border-x-[3px] border-x-transparent border-t-[4px] border-t-[#111]" /></div>
          </div>
          <Gap w="w-[6px]" />
          <div className="w-[95px] h-[14px] shrink-0 bg-white border border-[#777] flex items-center justify-between">
            <span className="text-[9.5px] leading-[12px] text-[#111] whitespace-nowrap">整个装配</span>
            <div className="w-[13px] h-[12px] bg-[#6f8fc8] border border-[#334] flex items-center justify-center"><div className="w-0 h-0 border-x-[3px] border-x-transparent border-t-[4px] border-t-[#111]" /></div>
          </div>
          <Tool n="filt" w="w-[22px]" />
          <Sep w="w-[10px]" />
          <Tool n="fg1" w="w-[17px]" /><Tool n="rbox" w="w-[17px]" /><Caret /><Tool n="fg2" w="w-[18px]" /><Tool n="fg3" w="w-[20px]" />
          <Sep w="w-[8px]" />
          <Tool n="cir" w="w-[18px]" /><Tool n="dots" w="w-[20px]" /><Caret />
          <Sep w="w-[6px]" />
          <Tool n="sel" on w="w-[20px]" /><Tool n="bcube" w="w-[18px]" />
        </div>

        <div className="h-[548px] flex shrink-0">
          <div className="relative w-[738px] shrink-0 bg-[#2f2f2f] overflow-hidden">
            <div className="absolute left-[248px] top-[494px] text-[19px] leading-[26px] tracking-[3px] text-[#e4e4e4] font-light whitespace-nowrap" style={CJK}>没有激流则谈</div>
            <div className="absolute left-[405px] top-[518px] text-[19px] leading-[26px] tracking-[3px] text-[#e4e4e4] font-light whitespace-nowrap" style={CJK}>没有山峰则谈不上攀登。</div>
            <Model />
            <Logo />
          </div>
          <Panel />
        </div>

        <Bar h="h-[28px]">
          {bottom.map((n, i) => <Tool key={i} n={n} w="w-[24.1px]" />)}
          <Gap w="w-[2px]" /><Tool n="rect" w="w-[16px]" /><Caret w="w-[9px]" /><Tool n="hex" w="w-[22px]" /><Caret w="w-[10px]" />
          <Tool n="csys" /><Tool n="cross" /><Tool n="oc" /><Tool n="tex" /><Tool n="pbox" /><Tool n="bell" /><Tool n="circ" /><LowCaret />
        </Bar>
        <div className="flex-1 bg-[#dcdcdc] flex items-start pl-[3px] overflow-hidden">
          <Grip />
          <Tool n="w1" on /><Tool n="w2" /><Tool n="w3" /><Tool n="w4" />
          <Sep w="w-[8px]" />
          <Gap w="w-[5px]" />
          <Tool n="w5" w="w-[20px]" /><Caret /><Tool n="w6" w="w-[22px]" /><Caret /><Tool n="w7" w="w-[22px]" /><Caret /><Tool n="w8" /><Tool n="w9" /><Tool n="w10" />
        </div>
      </div>
    </div>
  );
}
